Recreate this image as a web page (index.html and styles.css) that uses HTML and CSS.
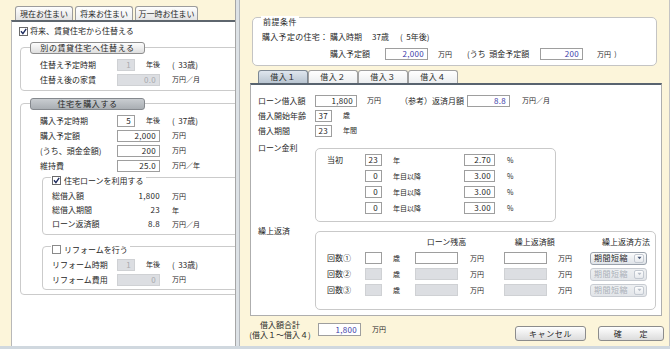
FILE: index.html
```html
<!DOCTYPE html>
<html lang="ja">
<head>
<meta charset="utf-8">
<link rel="stylesheet" href="styles.css">
</head>
<body>
<div class="app">
  <div class="left">
    <div class="tabs">
      <div class="tab">現在お住まい</div>
      <div class="tab active">将来お住まい</div>
      <div class="tab wide">万一時お住まい</div>
    </div>
    <div class="lpanel">
      <div class="chkrow">
        <svg class="cb" viewBox="0 0 9 9"><rect x=".5" y=".5" width="8" height="8" fill="#fff" stroke="#6a6a6a"/><path d="M2 4.3l1.9 2.3L7.2 1.8" fill="none" stroke="#1d2b5e" stroke-width="1.4"/></svg>
        <span>将来、賃貸住宅から住替える</span>
      </div>

      <div class="gbox g1">
        <div class="ghead">別の賃貸住宅へ住替える</div>
        <div class="rows">
          <div class="row"><span class="lbl">住替え予定時期</span><span class="inp w18 dis">1</span><span class="unit u-s">年後</span><span class="age">(  33歳)</span></div>
          <div class="row"><span class="lbl">住替え後の家賃</span><span class="inp w43 dis">0.0</span><span class="unit u-l">万円／月</span></div>
        </div>
      </div>

      <div class="gbox g2">
        <div class="ghead dark">住宅を購入する</div>
        <div class="rows">
          <div class="row"><span class="lbl">購入予定時期</span><span class="inp w18">5</span><span class="unit u-s">年後</span><span class="age">(  37歳)</span></div>
          <div class="row"><span class="lbl">購入予定額</span><span class="inp w43">2,000</span><span class="unit u-l">万円</span></div>
          <div class="row"><span class="lbl">(うち、頭金金額)</span><span class="inp w43">200</span><span class="unit u-l">万円</span></div>
          <div class="row"><span class="lbl">維持費</span><span class="inp w43">25.0</span><span class="unit u-l">万円／年</span></div>
        </div>

        <div class="gbox sub loan">
          <div class="shead">
            <svg class="cb" viewBox="0 0 9 9"><rect x=".5" y=".5" width="8" height="8" fill="#fff" stroke="#6a6a6a"/><path d="M2 4.3l1.9 2.3L7.2 1.8" fill="none" stroke="#1d2b5e" stroke-width="1.4"/></svg>
            <span>住宅ローンを利用する</span>
          </div>
          <div class="srows">
            <div class="row r14"><span class="slbl">総借入額</span><span class="val">1,800</span><span class="unit u-v">万円</span></div>
            <div class="row r14"><span class="slbl">総借入期間</span><span class="val">23</span><span class="unit u-v">年</span></div>
            <div class="row r14"><span class="slbl">ローン返済額</span><span class="val">8.8</span><span class="unit u-v">万円／月</span></div>
          </div>
        </div>

        <div class="gbox sub reform">
          <div class="shead">
            <svg class="cb" viewBox="0 0 9 9"><rect x=".5" y=".5" width="8" height="8" fill="#fff" stroke="#8a8a8a"/></svg>
            <span>リフォームを行う</span>
          </div>
          <div class="srows rf">
            <div class="row"><span class="slbl">リフォーム時期</span><span class="inp w18 dis">1</span><span class="unit u-s">年後</span><span class="age">(  33歳)</span></div>
            <div class="row"><span class="slbl">リフォーム費用</span><span class="inp w43 dis">0</span><span class="unit u-l">万円</span></div>
          </div>
        </div>
      </div>
    </div>
  </div>

  <div class="splitter"></div>

  <div class="right">
    <div class="pre">
      <div class="pre-title">前提条件</div>
      <div class="prow">
        <span class="p1">購入予定の住宅：</span>
        <span class="p2">購入時期</span>
        <span class="p3">37歳</span>
        <span class="p4">(  5年後)</span>
      </div>
      <div class="prow pr2">
        <span class="p2b">購入予定額</span>
        <span class="inp w43 blue">2,000</span>
        <span class="pu1">万円</span>
        <span class="pu2">(うち&nbsp;&nbsp;頭金予定額</span>
        <span class="inp w43 blue">200</span>
        <span class="pu3">万円&nbsp;&nbsp;)</span>
      </div>
    </div>

    <div class="ltabs">
      <div class="ltab active">借入１</div>
      <div class="ltab">借入２</div>
      <div class="ltab">借入３</div>
      <div class="ltab">借入４</div>
    </div>

    <div class="tc">
      <div class="r2"><span class="l2">ローン借入額</span><span class="inp w42">1,800</span><span class="u10">万円</span><span class="ref">（参考）返済月額</span><span class="inp w43 blue">8.8</span><span class="u12">万円／月</span></div>
      <div class="r2"><span class="l2">借入開始年齢</span><span class="inp w17">37</span><span class="u11">歳</span></div>
      <div class="r2"><span class="l2">借入期間</span><span class="inp w17">23</span><span class="u11">年間</span></div>

      <div class="sect kinri-sect">
        <span class="l2 slabel">ローン金利</span>
        <div class="ibox kinri">
          <div class="kr"><span class="kl">当初</span><span class="inp w17">23</span><span class="ku">年</span><span class="inp w31">2.70</span><span class="u12">%</span></div>
          <div class="kr"><span class="kl"></span><span class="inp w17">0</span><span class="ku">年目以降</span><span class="inp w31">3.00</span><span class="u12">%</span></div>
          <div class="kr"><span class="kl"></span><span class="inp w17">0</span><span class="ku">年目以降</span><span class="inp w31">3.00</span><span class="u12">%</span></div>
          <div class="kr"><span class="kl"></span><span class="inp w17">0</span><span class="ku">年目以降</span><span class="inp w31">3.00</span><span class="u12">%</span></div>
        </div>
      </div>

      <div class="sect kuri-sect">
        <span class="l2 slabel">繰上返済</span>
        <div class="ibox kuri">
          <div class="khead"><span class="kh0"></span><span class="kh1">ローン残高</span><span class="kh2">繰上返済額</span><span class="kh3">繰上返済方法</span></div>
          <div class="kr"><span class="kl">回数①</span><span class="inp w17"></span><span class="ku2">歳</span><span class="inp w43"></span><span class="ku3">万円</span><span class="inp w43"></span><span class="ku4">万円</span><span class="sel"><span class="st">期間短縮</span><span class="sa"><svg viewBox="0 0 6 4"><path d="M0.5 0.5h5L3 3.5z" fill="#4a5a78"/></svg></span></span></div>
          <div class="kr"><span class="kl">回数②</span><span class="inp w17 dis"></span><span class="ku2">歳</span><span class="inp w43 dis"></span><span class="ku3">万円</span><span class="inp w43 dis"></span><span class="ku4">万円</span><span class="sel off"><span class="st">期間短縮</span><span class="sa"><svg viewBox="0 0 6 4"><path d="M0.5 0.5h5L3 3.5z" fill="#b8bec8"/></svg></span></span></div>
          <div class="kr"><span class="kl">回数③</span><span class="inp w17 dis"></span><span class="ku2">歳</span><span class="inp w43 dis"></span><span class="ku3">万円</span><span class="inp w43 dis"></span><span class="ku4">万円</span><span class="sel off"><span class="st">期間短縮</span><span class="sa"><svg viewBox="0 0 6 4"><path d="M0.5 0.5h5L3 3.5z" fill="#b8bec8"/></svg></span></span></div>
        </div>
      </div>
    </div>

    <div class="foot">
      <div class="ftl">借入額合計<br>(借入１～借入４)</div>
      <span class="inp w43 blue fin">1,800</span>
      <span class="fu">万円</span>
      <div class="btns">
        <div class="btn cancel">キャンセル</div>
        <div class="btn ok">確　　定</div>
      </div>
    </div>
  </div>
</div>
<div class="bar"></div>
</body>
</html>
```

FILE: styles.css
```css
* { box-sizing: border-box; }
html, body { margin: 0; padding: 0; }
body {
  width: 670px; height: 349px; overflow: hidden;
  font-family: "Noto Sans CJK JP", "Noto Sans", sans-serif;
  font-size: 8px; line-height: 1; color: #262626;
  background: #d3dbe1;
}
.app { display: flex; height: 346px; }
.bar { height: 3px; background: #d0d8df; }

/* left */
.left { width: 235px; background: #fcf5da; display: flex; flex-direction: column; padding: 6px 0 0 11px; }
.tabs { display: flex; gap: 2px; margin-left: 4px; height: 14px; }
.tab {
  width: 58px; height: 14px; border: 1px solid #9c9c9c; border-bottom: none;
  border-radius: 3px 3px 0 0; background: linear-gradient(#fefefe, #e3e3e3);
  display: flex; align-items: center; justify-content: center; color: #262626;
}
.tab.active { background: linear-gradient(#ffffff, #eef0f2); }
.tab.wide { width: 63px; }
.lpanel { flex: 1; background: #fff; border-top: 2px solid #5e666e; border-left: 1px solid #b8b8b8; overflow: hidden; }
.chkrow { display: flex; align-items: center; height: 12px; margin-top: 3px; padding-left: 7px; gap: 2px; }
.cb { width: 9px; height: 9px; flex: none; display: block; }

.gbox { border: 1px solid #cbcbcb; border-radius: 4px; }
.g1 { margin: 10px -10px 0 8px; padding-bottom: 3px; }
.g2 { margin: 12px -10px 0 8px; padding-bottom: 4px; }
.ghead {
  margin: -6px 0 0 9px; width: 115px; height: 12px;
  border: 1px solid #8e8e8e; border-radius: 3px;
  background: linear-gradient(#fdfdfd, #dedede);
  display: flex; align-items: center; justify-content: center; letter-spacing: 0.6px; color: #262626;
}
.ghead.dark { background: linear-gradient(#c9cdd1, #a9aeb3); border-color: #85898e; }
.rows { padding: 3px 0 0 19px; }
.row { display: flex; align-items: center; height: 15px; }
.row.r14 { height: 14px; }
.lbl { width: 77px; }
.inp {
  display: flex; align-items: center; justify-content: flex-end;
  height: 12px; border: 1px solid #9e9e9e; background: #fff; padding-right: 3px; flex: none; color: #262626;
  letter-spacing: 0.3px;
}
.inp.dis { background: #dcdee2; border-color: #cfd1d4; color: #a8aaae; }
.inp.blue { color: #3a3aa8; }
.w17 { width: 17px; }
.w18 { width: 18px; }
.w31 { width: 31px; }
.w42 { width: 42px; }
.w43 { width: 43px; }
.unit { flex: none; }
.u-s { margin-left: 11px; width: 26px; font-size: 7px; }
.u-l { margin-left: 12px; font-size: 7px; }
.u-v { margin-left: 11px; font-size: 7px; }
.age { white-space: pre; }

.sub { margin-right: -10px; }
.loan { margin: 4px -10px 0 21px; padding-bottom: 3px; }
.reform { margin: 11px -10px 0 21px; padding-bottom: 2px; }
.shead { display: inline-flex; align-items: center; gap: 3px; height: 11px; margin: -6px 0 0 8px; padding: 0 2px 0 1px; background: #fff; }
.srows { padding: 3px 0 0 9px; }
.srows.rf { padding-top: 2px; }
.slbl { width: 65px; }
.val { width: 44px; text-align: right; padding-right: 1px; letter-spacing: 0.3px; }

.splitter { width: 5px; background: #dde2e6; border-left: 1px solid #a6a6a6; border-right: 1px solid #b4b8bc; flex: none; }

/* right */
.right { flex: 1; background: #fcf5da; padding-left: 10px; border-right: 1px solid #c4c4c4; display: flex; flex-direction: column; }
.pre { width: 405px; margin: 17px 0 0 2px; border: 1px solid #c4c4c4; border-radius: 5px; background: #fff; padding: 0 0 5px 9px; }
.pre-title { display: inline-block; margin: -6px 0 0 -1px; padding: 0 2px; background: #fff; height: 11px; line-height: 11px; letter-spacing: 0.5px; }
.prow { display: flex; align-items: center; height: 12px; margin-top: 4px; }
.prow.pr2 { margin-top: 5px; }
.p1 { width: 68px; letter-spacing: 0.3px; }
.p2 { width: 42px; }
.p3 { width: 28px; }
.p4 { white-space: pre; }
.p2b { margin-left: 68px; width: 55px; }
.pu1 { margin-left: 10px; width: 29px; font-size: 7px; }
.pu2 { width: 73px; }
.pu3 { margin-left: 14px; font-size: 7px; }

.ltabs { display: flex; margin: 4px 0 0 8px; height: 13px; }
.ltab {
  width: 50px; height: 13px; border: 1px solid #a0a0a0; border-bottom: none; border-radius: 3px 3px 0 0;
  background: linear-gradient(#ffffff, #eceef0); display: flex; align-items: center; justify-content: center; letter-spacing: 0.5px;
}
.ltab.active { background: linear-gradient(#dfe6ee, #b9c5d1); border-color: #7d8894; }
.tc { width: 412px; background: #fff; border: 1px solid #aeaeae; border-top: 2px solid #58636f; padding: 8px 0 5px 7px; }
.r2 { display: flex; align-items: center; height: 15px; }
.l2 { width: 57px; flex: none; }
.u10 { margin-left: 10px; width: 33px; font-size: 7px; }
.ref { width: 67px; }
.u12 { margin-left: 12px; font-size: 7px; }
.u11 { margin-left: 11px; font-size: 7px; }

.sect { display: flex; align-items: flex-start; }
.slabel { margin-top: -4px; }
.kinri-sect { margin-top: 10px; }
.kuri-sect { margin-top: 9px; }
.ibox { border: 1px solid #c9c9c9; border-radius: 5px; }
.kinri { width: 241px; padding: 3px 0 5px 11px; }
.kuri { width: 341px; padding: 4px 0 11px 11px; }
.kr { display: flex; align-items: center; height: 16px; }
.kl { width: 38px; flex: none; }
.ku { margin-left: 11px; width: 71px; font-size: 7px; }
.khead { display: flex; align-items: center; height: 12px; margin-bottom: 2px; }
.kh0 { width: 99px; }
.kh1 { width: 45px; text-align: center; }
.kh2 { margin-left: 44px; width: 45px; text-align: center; }
.kh3 { margin-left: 40px; width: 59px; text-align: center; }
.ku2 { margin-left: 11px; width: 22px; font-size: 7px; }
.ku3 { margin-left: 12px; width: 34px; font-size: 7px; }
.ku4 { margin-left: 11px; width: 32px; font-size: 7px; }
.sel {
  width: 57px; height: 13px; border: 1px solid #9aa2ac; border-radius: 3px;
  background: linear-gradient(#fbfcfd, #dfe3e8); display: flex; align-items: center; justify-content: space-between; padding: 0 2px 0 3px;
}
.sel .st { letter-spacing: 0.5px; color: #262626; }
.sel .sa { width: 10px; height: 9px; border: 1px solid #c3c9d1; border-radius: 2px; background: linear-gradient(#ffffff, #e6e9ed); display: flex; align-items: center; justify-content: center; }
.sel .sa svg { width: 5px; height: 4px; display: block; }
.sel.off { border-color: #c8ccd2; background: linear-gradient(#eef0f2, #e2e5e9); }
.sel.off .st { color: #aab0b8; }

.foot { display: flex; align-items: flex-start; height: 33px; padding-top: 4px; }
.ftl { width: 64px; margin-left: -2px; text-align: center; line-height: 10px; }
.fin { margin-top: 3px; margin-left: 6px; height: 13px; }
.fu { margin: 6px 0 0 11px; font-size: 7px; }
.btns { margin-left: auto; margin-right: 5px; display: flex; gap: 12px; margin-top: 6px; }
.btn {
  height: 15px; border: 1px solid #8c8c8c; border-radius: 3px; background: linear-gradient(#ffffff, #dcdcdc);
  display: flex; align-items: center; justify-content: center; color: #262626; letter-spacing: 0.6px;
}
.btn.cancel { width: 71px; }
.btn.ok { width: 66px; white-space: pre; }
```
